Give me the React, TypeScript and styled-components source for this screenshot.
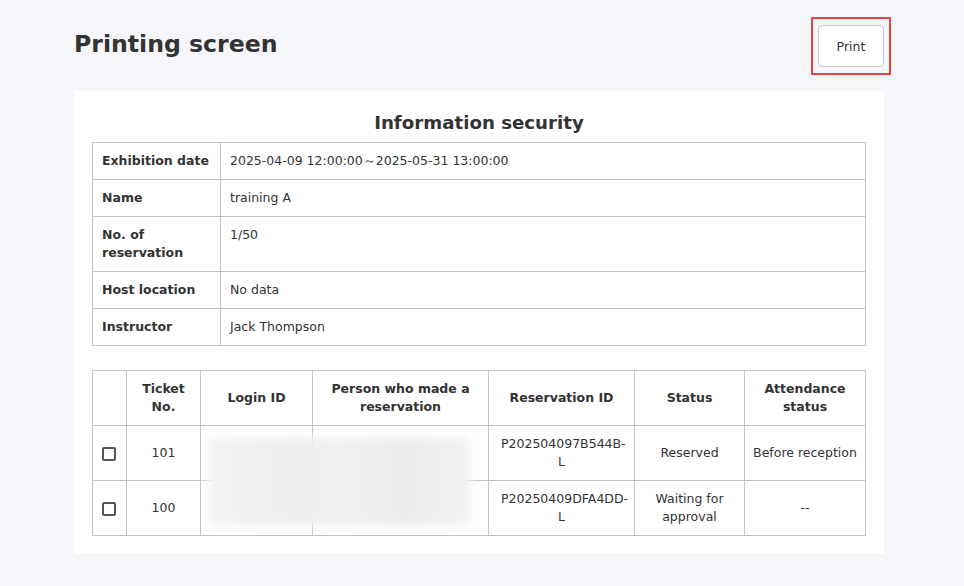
import React from "react";
import styled, { createGlobalStyle } from "styled-components";

const Global = createGlobalStyle`
  html, body { margin: 0; padding: 0; background: #f5f6fa; }
  body { font-family: "DejaVu Sans", Verdana, sans-serif; color: #333; font-size: 12.5px; }
  * { box-sizing: border-box; }
`;

const Page = styled.div`
  padding: 17px 80px 32px 74px;
  display: flex;
  flex-direction: column;
`;

const Header = styled.div`
  display: flex;
  justify-content: space-between;
  align-items: flex-start;
  height: 74px;
`;

const Title = styled.h1`
  margin: 13px 0 0 0;
  font-size: 23.6px;
  font-weight: bold;
  color: #333;
`;

const Highlight = styled.div`
  border: 2px solid #ef4047;
  padding: 6px 5px;
  margin-right: -7px;
`;

const PrintButton = styled.button`
  display: block;
  width: 66px;
  height: 42px;
  background: #fff;
  border: 1px solid #c9c9cd;
  border-radius: 4px;
  font-family: "DejaVu Sans", Verdana, sans-serif;
  font-size: 12.5px;
  color: #333;
  cursor: pointer;
`;

const Card = styled.div`
  background: #fff;
  padding: 20px 18px 18px 18px;
  display: flex;
  flex-direction: column;
`;

const CardTitle = styled.h2`
  margin: 0 0 7px 0;
  text-align: center;
  font-size: 18.2px;
  font-weight: bold;
  line-height: 24px;
  color: #333;
`;

const Table = styled.table`
  width: 100%;
  border-collapse: collapse;
  table-layout: fixed;
  font-size: 12.5px;
  line-height: 18px;
`;

const Label = styled.th`
  border: 1px solid #c4c4c4;
  text-align: left;
  font-weight: bold;
  padding: 9px 9px 9px 9px;
  vertical-align: top;
  width: 128px;
`;

const Value = styled.td`
  border: 1px solid #c4c4c4;
  padding: 9px 9px;
  vertical-align: top;
`;

const ListWrap = styled.div`
  position: relative;
  margin-top: 24px;
`;

const Head = styled.th<{ $w: number }>`
  border: 1px solid #c4c4c4;
  font-weight: bold;
  text-align: center;
  padding: 9px 8px;
  height: 55px;
  width: ${(p) => p.$w}px;
`;

const Cell = styled.td<{ $px?: number }>`
  border: 1px solid #c4c4c4;
  text-align: center;
  padding: 9px ${(p) => p.$px ?? 5}px;
  height: 55px;
`;

const Check = styled.span`
  display: inline-block;
  width: 14px;
  height: 14px;
  border: 2px solid #555;
  border-radius: 2px;
  vertical-align: middle;
  margin-left: -1px;
`;

const Blur = styled.div`
  position: absolute;
  left: 115px;
  top: 67px;
  width: 264px;
  height: 89px;
  background: linear-gradient(90deg, #f3f3f3 0%, #eeeeee 35%, #f1f1f1 50%, #ececec 75%, #f2f2f2 100%);
  filter: blur(5px);
`;

const info = [
  ["Exhibition date", "2025-04-09 12:00:00～2025-05-31 13:00:00"],
  ["Name", "training A"],
  ["No. of reservation", "1/50"],
  ["Host location", "No data"],
  ["Instructor", "Jack Thompson"],
];

const rows = [
  { no: "101", rid: "P202504097B544B-L", status: "Reserved", att: "Before reception" },
  { no: "100", rid: "P20250409DFA4DD-L", status: "Waiting for approval", att: "--" },
];

export default function App() {
  return (
    <>
      <Global />
      <Page>
        <Header>
          <Title>Printing screen</Title>
          <Highlight>
            <PrintButton>Print</PrintButton>
          </Highlight>
        </Header>
        <Card>
          <CardTitle>Information security</CardTitle>
          <Table>
            <tbody>
              {info.map(([k, v]) => (
                <tr key={k}>
                  <Label>{k}</Label>
                  <Value>{v}</Value>
                </tr>
              ))}
            </tbody>
          </Table>
          <ListWrap>
            <Table>
              <thead>
                <tr>
                  <Head $w={34}></Head>
                  <Head $w={74}>Ticket No.</Head>
                  <Head $w={112}>Login ID</Head>
                  <Head $w={176}>Person who made a reservation</Head>
                  <Head $w={146}>Reservation ID</Head>
                  <Head $w={110}>Status</Head>
                  <Head $w={121}>Attendance status</Head>
                </tr>
              </thead>
              <tbody>
                {rows.map((r) => (
                  <tr key={r.no}>
                    <Cell><Check /></Cell>
                    <Cell>{r.no}</Cell>
                    <Cell></Cell>
                    <Cell></Cell>
                    <Cell $px={12}>{r.rid}</Cell>
                    <Cell $px={10}>{r.status}</Cell>
                    <Cell>{r.att}</Cell>
                  </tr>
                ))}
              </tbody>
            </Table>
            <Blur />
          </ListWrap>
        </Card>
      </Page>
    </>
  );
}
